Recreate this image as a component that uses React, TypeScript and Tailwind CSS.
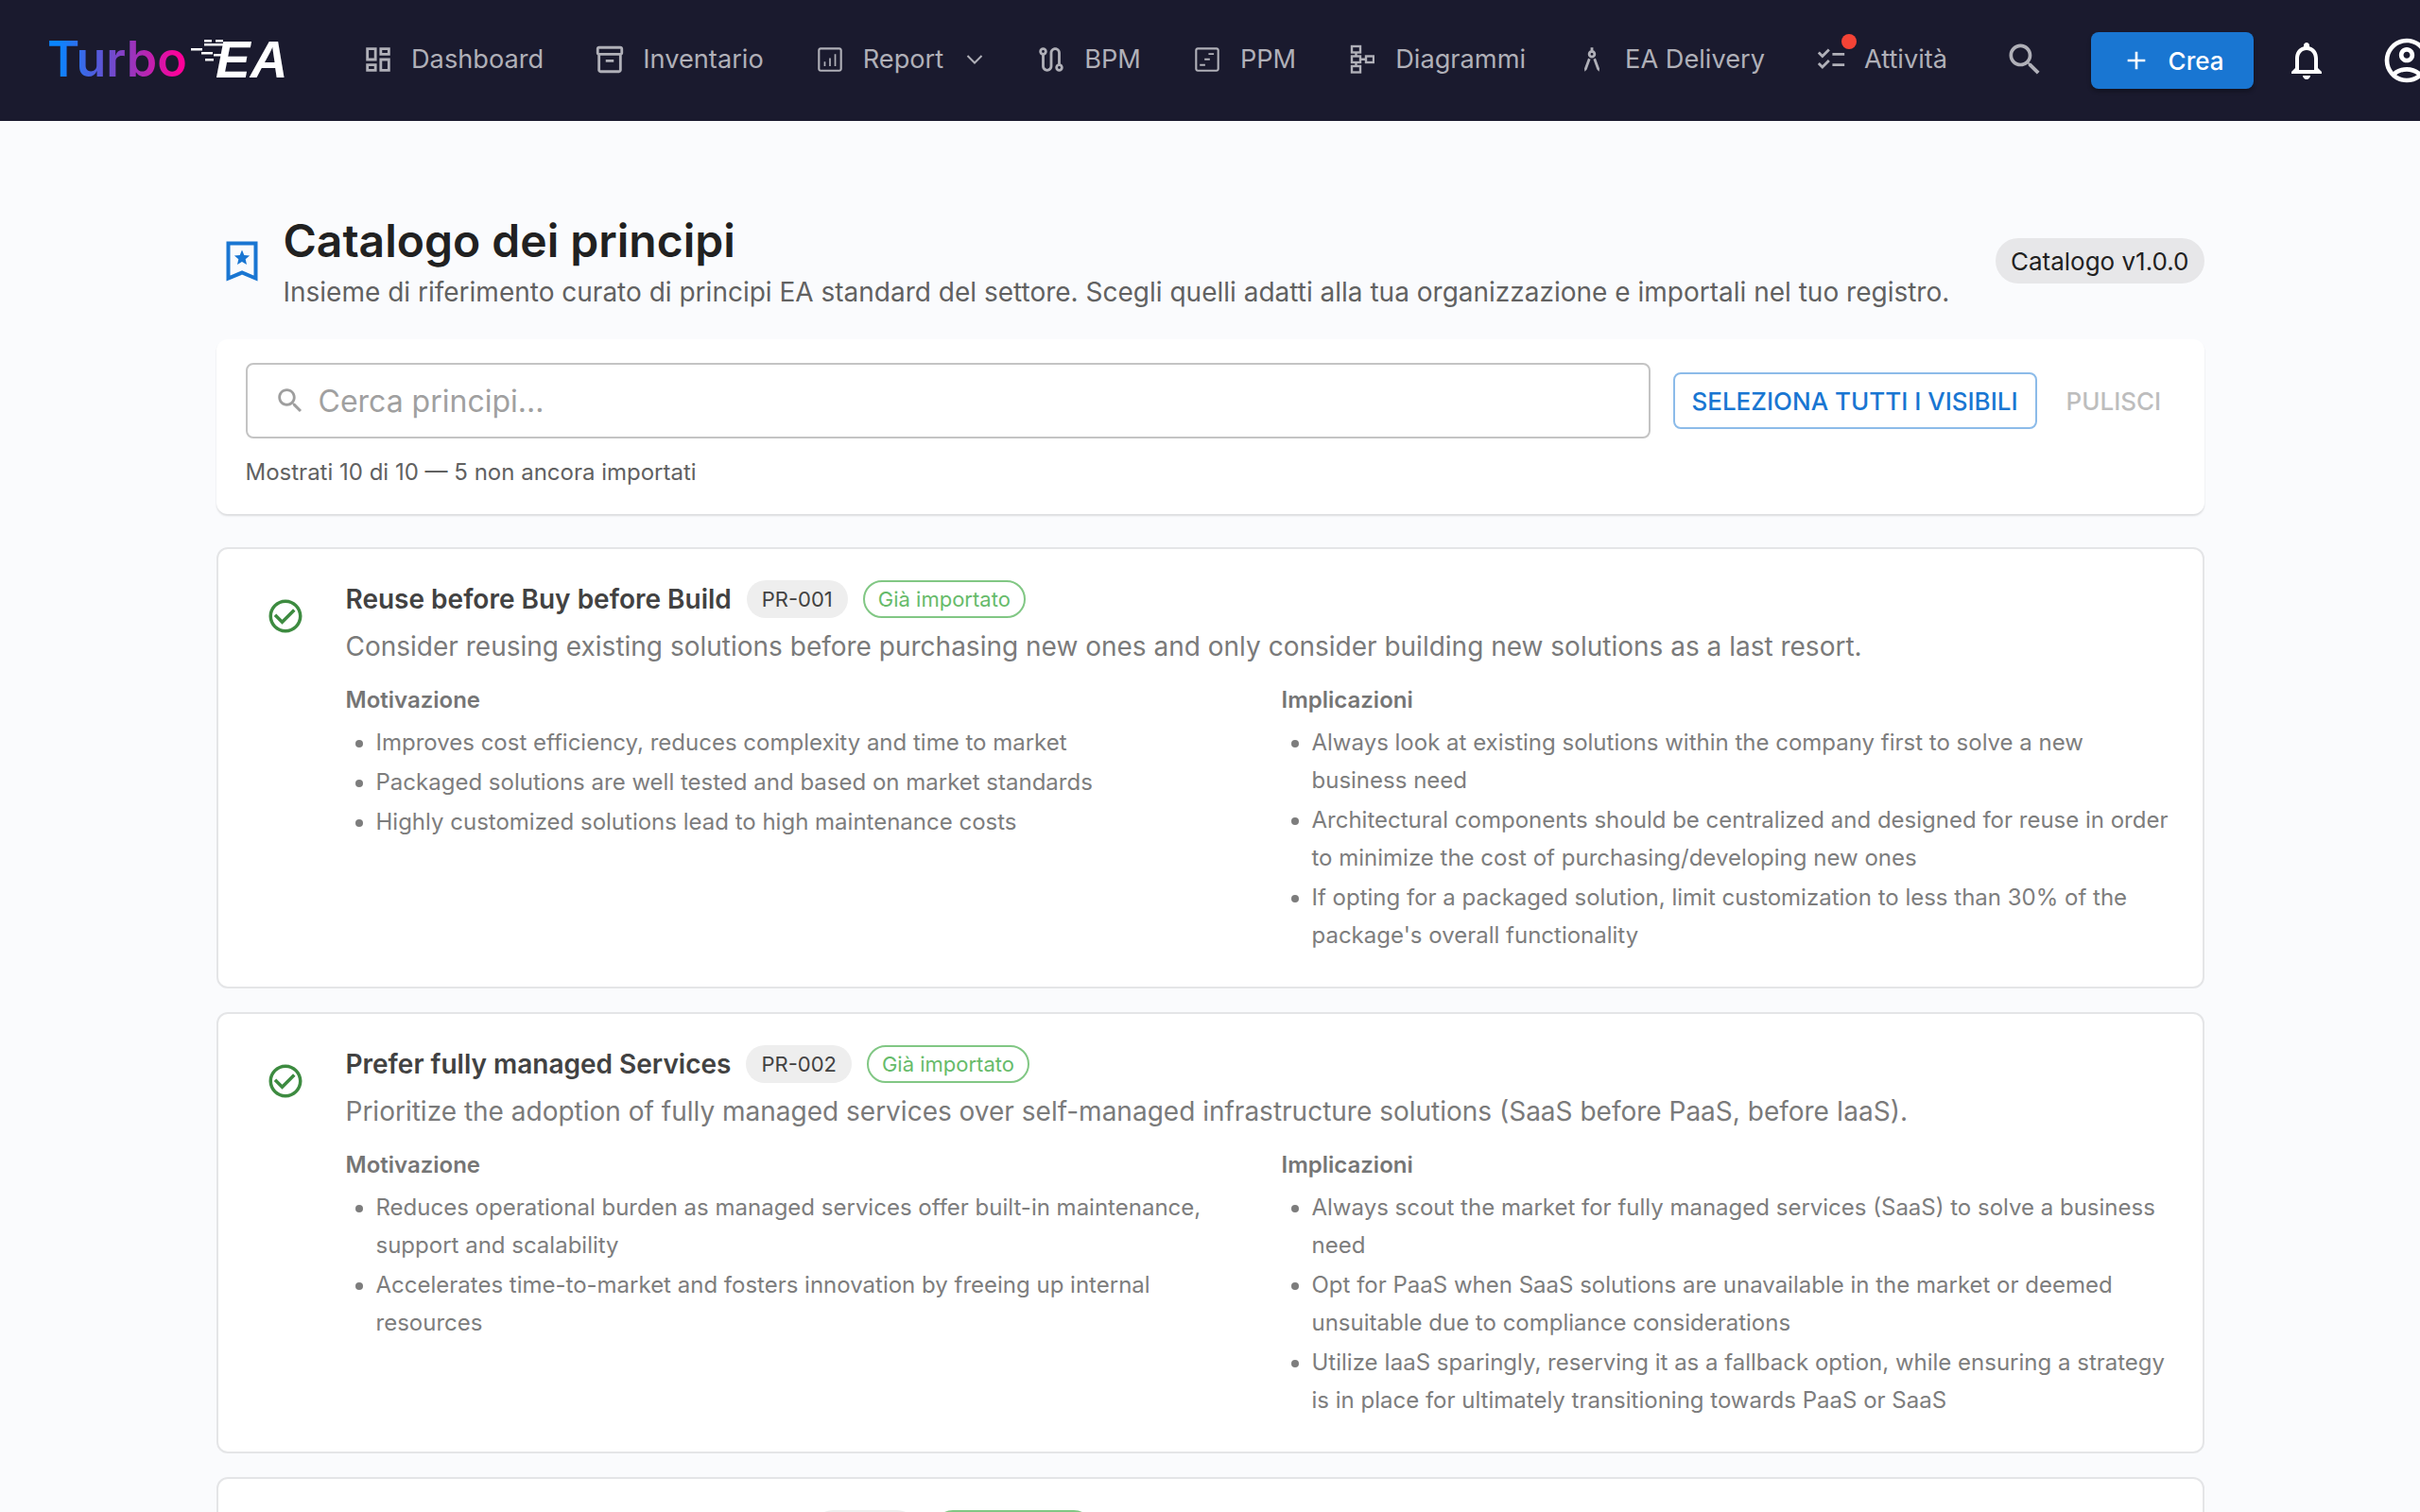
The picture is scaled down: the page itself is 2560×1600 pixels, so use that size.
import React from 'react';

type IconProps = { d: string; size: number; className?: string };

// Material-style icon, all drawn in a 24 box
function Icon({ d, size, className }: IconProps) {
  return (
    <svg width={size} height={size} viewBox="0 0 24 24" fill="currentColor" className={`shrink-0 ${className ?? ''}`}>
      <path d={d} />
    </svg>
  );
}

const icons = {
  dashboard: 'M19 5v2h-4V5zM9 5v6H5V5zm10 8v6h-4v-6zM9 17v2H5v-2zM21 3h-8v6h8zM11 3H3v10h8zm10 8h-8v10h8zm-10 4H3v6h8z',
  inventory: 'M20 2H4c-1 0-2 .9-2 2v3.01c0 .72.43 1.34 1 1.69V20c0 1.1 1.1 2 2 2h14c.9 0 2-.9 2-2V8.7c.57-.35 1-.97 1-1.69V4c0-1.1-1-2-2-2m-1 18H5V9h14zm1-13H4V4h16zM9 12h6v2H9z',
  report: 'M19 3H5c-1.1 0-2 .9-2 2v14c0 1.1.9 2 2 2h14c1.1 0 2-.9 2-2V5c0-1.1-.9-2-2-2m.5 16c0 .3-.2.5-.5.5H5c-.3 0-.5-.2-.5-.5V5c0-.3.2-.5.5-.5h14c.3 0 .5.2.5.5zM7.5 13.5h1.2V17H7.5zm3.9-2.5h1.2v6h-1.2zm3.9-3h1.2v9h-1.2z',
  route: 'M19 15.18V7c0-2.21-1.79-4-4-4s-4 1.79-4 4v10c0 1.1-.9 2-2 2s-2-.9-2-2V8.82C8.16 8.4 9 7.3 9 6c0-1.66-1.34-3-3-3S3 4.34 3 6c0 1.3.84 2.4 2 2.82V17c0 2.21 1.79 4 4 4s4-1.79 4-4V7c0-1.1.9-2 2-2s2 .9 2 2v8.18c-1.16.41-2 1.51-2 2.82 0 1.66 1.34 3 3 3s3-1.34 3-3c0-1.3-.84-2.4-2-2.82M6 7c-.55 0-1-.45-1-1s.45-1 1-1 1 .45 1 1-.45 1-1 1m12 12c-.55 0-1-.45-1-1s.45-1 1-1 1 .45 1 1-.45 1-1 1',
  timeline: 'M19 3H5c-1.1 0-2 .9-2 2v14c0 1.1.9 2 2 2h14c1.1 0 2-.9 2-2V5c0-1.1-.9-2-2-2m.5 16c0 .3-.2.5-.5.5H5c-.3 0-.5-.2-.5-.5V5c0-.3.2-.5.5-.5h14c.3 0 .5.2.5.5zM13 7.2h4v1.3h-4zm-3 4h4v1.3h-4zm-3.500 4.200h4v1.300h-4z',
  architecture: 'M6.36 18.78L6.61 21l1.62-1.54 2.77-7.6c-.68-.17-1.28-.51-1.77-.98zM14.77 10.880c-.49.47-1.100.81-1.770.98l2.770 7.600L17.390 21l.26-2.220zM15 8c0-1.300-.84-2.400-2-2.820V3h-2v2.180C9.840 5.600 9 6.700 9 8c0 1.660 1.340 3 3 3s3-1.340 3-3m-3 1c-.55 0-1-.45-1-1s.45-1 1-1 1 .45 1 1-.45 1-1 1',
  checklist: 'M22 7h-9v2h9zm0 8h-9v2h9zM5.54 11 2 7.46l1.41-1.41 2.12 2.12 4.24-4.24 1.41 1.41zm0 8L2 15.46l1.41-1.41 2.12 2.12 4.24-4.24 1.41 1.41z',
  search: 'M15.5 14h-.79l-.28-.27C15.41 12.59 16 11.11 16 9.5 16 5.91 13.09 3 9.5 3S3 5.91 3 9.5 5.910 16 9.5 16c1.61 0 3.09-.59 4.23-1.57l.27.28v.79l5 4.99L20.49 19zm-6 0C7.01 14 5 11.99 5 9.5S7.01 5 9.5 5 14 7.01 14 9.5 11.99 14 9.5 14',
  plus: 'M19 13h-6v6h-2v-6H5v-2h6V5h2v6h6z',
  bell: 'M12 22c1.1 0 2-.9 2-2h-4c0 1.1.9 2 2 2m6-6v-5c0-3.07-1.63-5.64-4.5-6.32V4c0-.83-.67-1.5-1.5-1.5s-1.5.67-1.5 1.500v.68C7.64 5.360 6 7.920 6 11v5l-2 2v1h16v-1zm-2 1H8v-6c0-2.480 1.510-4.500 4-4.500s4 2.020 4 4.500z',
  account: 'M12 2C6.48 2 2 6.48 2 12s4.48 10 10 10 10-4.48 10-10S17.52 2 12 2M7.35 18.5C8.66 17.56 10.26 17 12 17s3.34.56 4.65 1.5c-1.31.94-2.91 1.5-4.65 1.5s-3.34-.56-4.65-1.5m10.79-1.380C16.450 15.800 14.320 15 12 15s-4.450.8-6.140 2.120C4.700 15.730 4 13.950 4 12c0-4.420 3.580-8 8-8s8 3.580 8 8c0 1.950-.7 3.730-1.860 5.120M12 6c-1.930 0-3.500 1.570-3.500 3.500S10.070 13 12 13s3.500-1.570 3.500-3.500S13.930 6 12 6m0 5c-.83 0-1.500-.67-1.500-1.500S11.170 8 12 8s1.500.67 1.500 1.500S12.830 11 12 11',
  checkCircle: 'M16.59 7.58 10 14.170l-3.590-3.580L5 12l5 5 8-8zM12 2C6.480 2 2 6.480 2 12s4.480 10 10 10 10-4.480 10-10S17.520 2 12 2m0 18c-4.420 0-8-3.580-8-8s3.580-8 8-8 8 3.580 8 8-3.580 8-8 8',
};

// Vertical flow chart glyph of the Diagrammi entry
function DiagramIcon() {
  return (
    <svg width="26" height="32" viewBox="0 0 26 32" fill="none" stroke="currentColor" strokeWidth="2.4" className="shrink-0">
      <rect x="2" y="2" width="9" height="6.500" />
      <rect x="2" y="12.500" width="9" height="6.500" />
      <rect x="2" y="23" width="9" height="6.500" />
      <rect x="17" y="12.500" width="8" height="6.500" />
      <path d="M6.500 8.500v4M6.500 19v4M11 15.700h6" />
    </svg>
  );
}

function Logo() {
  return (
    <div className="relative flex items-center shrink-0 w-[254px] h-[60px] mb-[2px] select-none">
      <span className="font-semibold text-[52px] leading-none bg-[linear-gradient(90deg,#0a84ff_8%,#7a45c8_50%,#ff0099_95%)] bg-clip-text text-transparent">
        Turbo
      </span>
      <span className="absolute left-[178px] top-[3px] font-['Liberation_Sans',sans-serif] italic font-bold text-[55px] leading-none text-white">
        EA
      </span>
      {/* speed lines in front of the E */}
      <svg width="70" height="40" viewBox="0 0 70 40" className="absolute left-[152px] top-[9px]">
        <g fill="#ffffff">
          <rect x="14" y="0" width="8" height="2.500" />
          <rect x="26" y="0" width="8" height="2.500" />
          <rect x="14" y="4" width="20" height="2.500" />
          <rect x="0" y="9" width="12" height="2.500" />
          <rect x="11" y="13" width="12" height="2.500" />
          <rect x="24" y="15" width="8" height="2.500" />
          <rect x="15" y="20" width="9" height="2.500" />
        </g>
      </svg>
    </div>
  );
}

function NavItem({ icon, label, after, badge }: { icon: React.ReactNode; label: string; after?: React.ReactNode; badge?: boolean }) {
  return (
    <div className="relative flex items-center shrink-0 text-[#b0b0b8] text-[27.2px]">
      <span className="flex items-center justify-center w-[26px] h-[34px] mr-[22px]">{icon}</span>
      <span>{label}</span>
      {after}
      {badge && <span className="absolute left-[24px] top-[-7px] w-[16px] h-[16px] rounded-full bg-[#f44336]" />}
    </div>
  );
}

function TopBar() {
  return (
    <header className="flex items-center h-[128px] bg-[#1a1a2e] pl-[50px] overflow-hidden">
      <Logo />
      <nav className="flex items-center shrink-0 gap-[57px] ml-[83px] mb-[2px]">
        <NavItem icon={<Icon d={icons.dashboard} size={34} />} label="Dashboard" />
        <NavItem icon={<Icon d={icons.inventory} size={34} />} label="Inventario" />
        <NavItem
          icon={<Icon d={icons.report} size={34} />}
          label="Report"
          after={
            <svg width="18" height="10" viewBox="0 0 18 10" fill="none" stroke="currentColor" strokeWidth="2" className="ml-[24px] mr-[2px]">
              <path d="M1.500 1l7.500 7.500L16.500 1" />
            </svg>
          }
        />
        <NavItem icon={<Icon d={icons.route} size={34} />} label="BPM" />
        <NavItem icon={<Icon d={icons.timeline} size={34} />} label="PPM" />
        <NavItem icon={<DiagramIcon />} label="Diagrammi" />
        <NavItem icon={<Icon d={icons.architecture} size={34} />} label="EA Delivery" />
        <NavItem icon={<Icon d={icons.checklist} size={34} />} label="Attività" badge />
      </nav>
      <Icon d={icons.search} size={44} className="ml-[60px] mb-[2px] text-[#b0b0b8]" />
      <button className="flex items-center justify-center shrink-0 w-[172px] h-[60px] ml-[48px] rounded-lg bg-[#1976d2] text-white text-[26px] font-medium shadow-[0_3px_4px_rgba(0,0,0,0.3)]">
        <Icon d={icons.plus} size={32} className="mr-[18px]" />
        Crea
      </button>
      <Icon d={icons.bell} size={48} className="ml-[32px] text-white" />
      <Icon d={icons.account} size={56} className="ml-[54px] text-white" />
    </header>
  );
}

type Principle = {
  title: string;
  code: string;
  text: string;
  why: string[];
  impl: string[];
};

const principles: Principle[] = [
  {
    title: 'Reuse before Buy before Build',
    code: 'PR-001',
    text: 'Consider reusing existing solutions before purchasing new ones and only consider building new solutions as a last resort.',
    why: [
      'Improves cost efficiency, reduces complexity and time to market',
      'Packaged solutions are well tested and based on market standards',
      'Highly customized solutions lead to high maintenance costs',
    ],
    impl: [
      'Always look at existing solutions within the company first to solve a new business need',
      'Architectural components should be centralized and designed for reuse in order to minimize the cost of purchasing/developing new ones',
      "If opting for a packaged solution, limit customization to less than 30% of the package's overall functionality",
    ],
  },
  {
    title: 'Prefer fully managed Services',
    code: 'PR-002',
    text: 'Prioritize the adoption of fully managed services over self-managed infrastructure solutions (SaaS before PaaS, before IaaS).',
    why: [
      'Reduces operational burden as managed services offer built-in maintenance, support and scalability',
      'Accelerates time-to-market and fosters innovation by freeing up internal resources',
    ],
    impl: [
      'Always scout the market for fully managed services (SaaS) to solve a business need',
      'Opt for PaaS when SaaS solutions are unavailable in the market or deemed unsuitable due to compliance considerations',
      'Utilize IaaS sparingly, reserving it as a fallback option, while ensuring a strategy is in place for ultimately transitioning towards PaaS or SaaS',
    ],
  },
];

function BulletColumn({ title, items }: { title: string; items: string[] }) {
  return (
    <div>
      <div className="text-[24px] leading-[34px] font-semibold text-[#757575] mt-[2px] mb-[8px]">{title}</div>
      <ul className="list-disc pl-[32px] text-[24px] leading-[40px] text-[#7d7d7d]">
        {items.map((item) => (
          <li key={item} className="mb-[2px]">
            {item}
          </li>
        ))}
      </ul>
    </div>
  );
}

function PrincipleCard({ item }: { item: Principle }) {
  return (
    <article className="flex bg-white border-2 border-[#e4e5e7] rounded-xl pt-[33px] pr-[33px] pb-[32px] pl-[50px]">
      <Icon d={icons.checkCircle} size={42} className="text-[#3d8b40] mt-[17px] mr-[43px]" />
      <div className="flex-1 min-w-0">
        <div className="flex items-center gap-[16px] h-[40px]">
          <span className="text-[28px] font-semibold text-[#424242]">{item.title}</span>
          <span className="flex items-center h-[40px] px-[16px] rounded-full bg-[#eeeeee] text-[22px] text-[#424242]">{item.code}</span>
          <span className="flex items-center h-[40px] px-[14px] rounded-full border-2 border-[#81c784] text-[22px] text-[#66bb6a]">
            Già importato
          </span>
        </div>
        <p className="mt-[9px] text-[28px] leading-[42px] text-[#7a7a7a]">{item.text}</p>
        <div className="grid grid-cols-2 gap-x-[49px] mt-[17px]">
          <BulletColumn title="Motivazione" items={item.why} />
          <BulletColumn title="Implicazioni" items={item.impl} />
        </div>
      </div>
    </article>
  );
}

export default function App() {
  return (
    <div className="h-[1600px] overflow-hidden bg-[#fafbfd] font-['Inter',sans-serif]">
      <TopBar />
      <main className="w-[2103px] mx-auto pt-[98px]">
        <div className="flex items-start">
          <svg width="34" height="44" viewBox="0 0 34 44" className="mt-[29px] ml-[10px] mr-[27px] shrink-0">
            <path d="M2.500 2.500h29v37L17 33.500 2.500 39.500z" fill="none" stroke="#1976d2" strokeWidth="4" />
            <path d="M17 9.500l2.300 5.400 5.800.5-4.400 3.800 1.300 5.700-5-3-5 3 1.300-5.700-4.400-3.800 5.800-.5z" fill="#1976d2" />
          </svg>
          <div className="flex-1">
            <h1 className="text-[48px] leading-[58px] font-semibold text-[#212121] mb-[3px]">Catalogo dei principi</h1>
            <p className="text-[28px] leading-[44px] text-[#616161]">
              Insieme di riferimento curato di principi EA standard del settore. Scegli quelli adatti alla tua organizzazione e importali nel tuo registro.
            </p>
          </div>
          <span className="flex items-center h-[48px] mt-[26px] px-[16px] rounded-full bg-[#e7e7e9] text-[26px] text-[#212121]">
            Catalogo v1.0.0
          </span>
        </div>

        <section className="mt-[28px] h-[185px] bg-white rounded-xl pt-[25px] px-[31px] shadow-[0_2px_2px_rgba(0,0,0,0.12)]">
          <div className="flex items-center">
            <label className="flex items-center shrink-0 w-[1486px] h-[80px] border-2 border-[#c4c4c4] rounded-lg pl-[28px]">
              <Icon d={icons.search} size={34} className="text-[#9e9e9e] mr-[13px]" />
              <input
                placeholder="Cerca principi..."
                className="flex-1 outline-none pt-[2px] text-[32px] text-[#212121] placeholder:text-[#a0a0a0]"
              />
            </label>
            <button className="shrink-0 ml-[24px] w-[385px] h-[60px] whitespace-nowrap border-2 border-[#8cbbe9] rounded-lg text-[26px] font-medium text-[#1976d2]">
              SELEZIONA TUTTI I VISIBILI
            </button>
            <button className="shrink-0 ml-[11px] h-[60px] px-[20px] text-[26px] font-medium text-[#bdbdbd]">PULISCI</button>
          </div>
          <div className="mt-[19px] text-[24px] leading-[34px] text-[#616161]">Mostrati 10 di 10 — 5 non ancora importati</div>
        </section>

        <div className="flex flex-col gap-[25px] mt-[35px]">
          {principles.map((p) => (
            <PrincipleCard key={p.code} item={p} />
          ))}
          {/* third card, only the very top of its chips is on screen */}
          <article className="flex bg-white border-2 border-[#e4e5e7] rounded-xl pt-[33px] pl-[135px] h-[200px]">
            <div className="flex items-center gap-[19px] h-[40px] ml-[495px]">
              <span className="w-[108px] h-[40px] rounded-full bg-[#eeeeee]" />
              <span className="w-[168px] h-[40px] rounded-full border-2 border-[#81c784]" />
            </div>
          </article>
        </div>
      </main>
    </div>
  );
}
